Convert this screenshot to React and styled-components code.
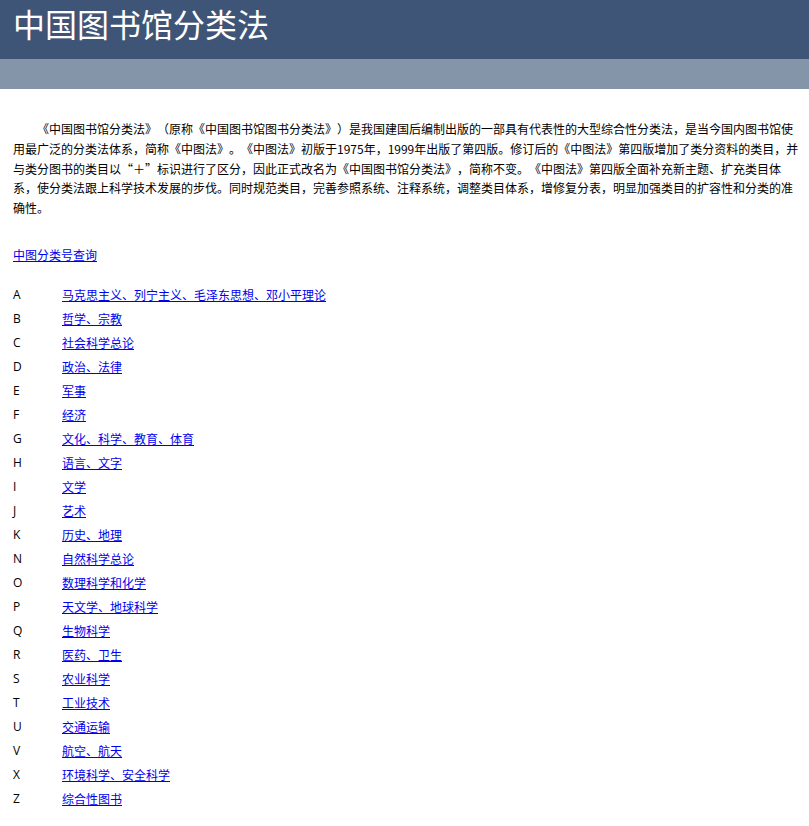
import styled, { createGlobalStyle } from "styled-components";

/* Data ---------------------------*/
const classes = [
    ["A", "马克思主义、列宁主义、毛泽东思想、邓小平理论"],
    ["B", "哲学、宗教"],
    ["C", "社会科学总论"],
    ["D", "政治、法律"],
    ["E", "军事"],
    ["F", "经济"],
    ["G", "文化、科学、教育、体育"],
    ["H", "语言、文字"],
    ["I", "文学"],
    ["J", "艺术"],
    ["K", "历史、地理"],
    ["N", "自然科学总论"],
    ["O", "数理科学和化学"],
    ["P", "天文学、地球科学"],
    ["Q", "生物科学"],
    ["R", "医药、卫生"],
    ["S", "农业科学"],
    ["T", "工业技术"],
    ["U", "交通运输"],
    ["V", "航空、航天"],
    ["X", "环境科学、安全科学"],
    ["Z", "综合性图书"],
];

const App = () => {
    return (
        <>
            <GlobalStyle />
            <Header>
                <h1>中国图书馆分类法</h1>
            </Header>
            <SubBar />
            <Main>
                <Intro>
                    《中国图书馆分类法》（原称《中国图书馆图书分类法》）是我国建国后编制出版的一部具有代表性的大型综合性分类法，是当今国内图书馆使用最广泛的分类法体系，简称《中图法》。《中图法》初版于1975年，1999年出版了第四版。修订后的《中图法》第四版增加了类分资料的类目，并与类分图书的类目以<Wide>“+”</Wide>标识进行了区分，因此正式改名为《中国图书馆分类法》，简称不变。《中图法》第四版全面补充新主题、扩充类目体系，使分类法跟上科学技术发展的步伐。同时规范类目，完善参照系统、注释系统，调整类目体系，增修复分表，明显加强类目的扩容性和分类的准确性。
                </Intro>
                <QueryLink href="#">中图分类号查询</QueryLink>
                <ClassList>
                    {classes.map(([code, name]) => (
                        <ClassRow key={code}>
                            <Code>{code}</Code>
                            <a href="#">{name}</a>
                        </ClassRow>
                    ))}
                </ClassList>
            </Main>
        </>
    );
};

export default App;

const GlobalStyle = createGlobalStyle`
    body {
        margin: 0;
        background: #fff;
        color: #000;
        font-family: "Noto Sans CJK SC", "Noto Sans", sans-serif;
        text-spacing-trim: space-all;
    }
    a {
        color: #0000ee;
    }
`;

const Header = styled.header`
    height: 59px;
    background: #3f5577;
    display: flex;
    align-items: center;
    padding: 0 13px;

    h1 {
        margin: 0;
        margin-top: -14px;
        font-size: 32px;
        font-weight: normal;
        line-height: 40px;
        color: #fff;
    }
`;

const SubBar = styled.div`
    height: 30px;
    background: #8494a9;
`;

const Main = styled.main`
    padding: 30px 6px 0 13px;
    font-size: 12px;
`;

const Intro = styled.p`
    margin: 0;
    line-height: 19.75px;
    text-indent: 2em;
    text-align: left;
`;

const Wide = styled.span`
    font-feature-settings: "fwid";
`;

const QueryLink = styled.a`
    display: block;
    width: max-content;
    margin-top: 27px;
    line-height: 20px;
`;

const ClassList = styled.div`
    display: flex;
    flex-direction: column;
    gap: 4px;
    margin-top: 20px;
`;

const ClassRow = styled.div`
    display: flex;
    line-height: 20px;
`;

const Code = styled.span`
    width: 49px;
    font-family: "Open Sans", "Noto Sans", sans-serif;
`;
